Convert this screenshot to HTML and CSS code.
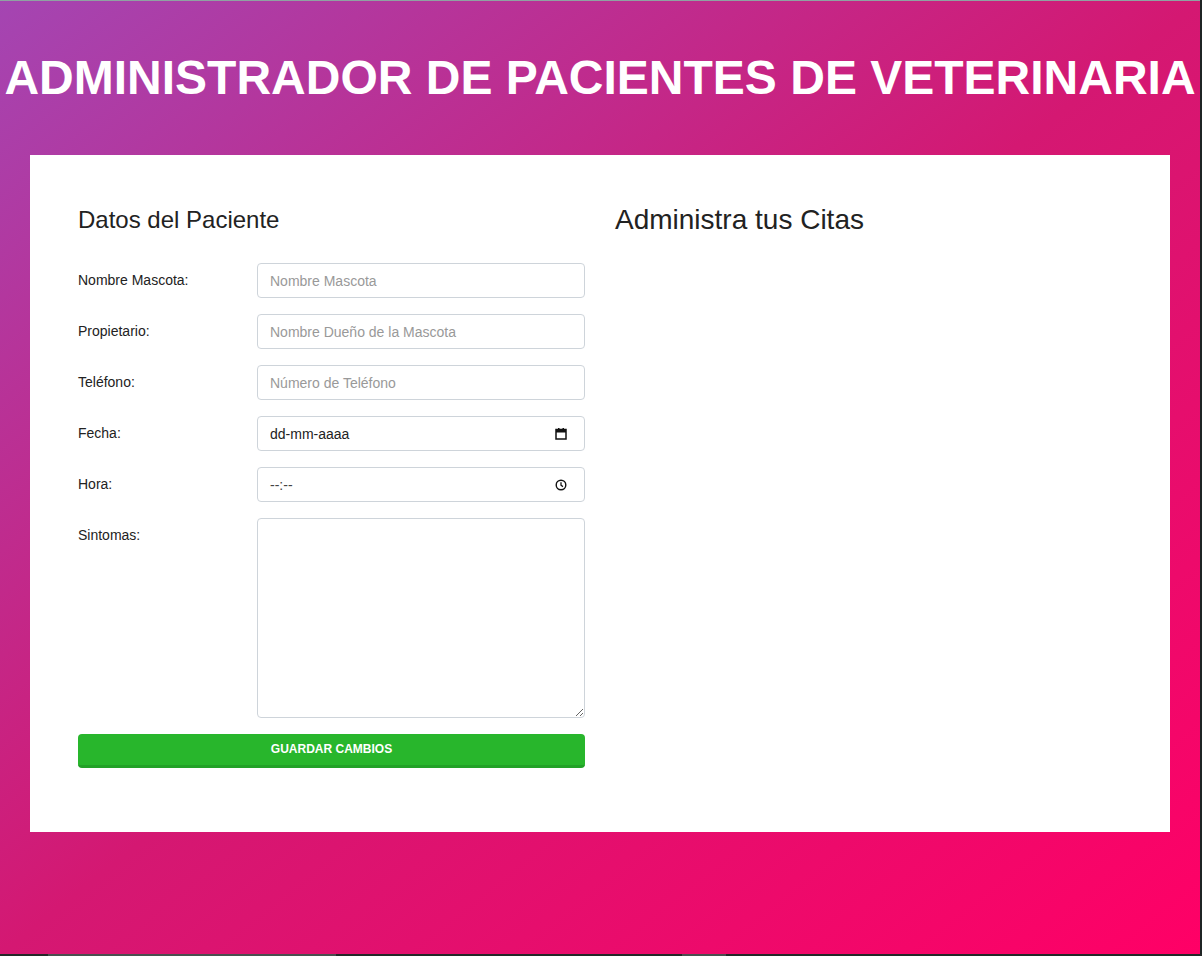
FILE: index.html
```html
<!DOCTYPE html>
<html lang="es">
<head>
<meta charset="utf-8">
<title>Administrador de Pacientes</title>
<link rel="stylesheet" href="styles.css">
</head>
<body>
<div class="screen">
  <h1 class="title">ADMINISTRADOR DE PACIENTES DE VETERINARIA</h1>
  <div class="card">
    <div class="col">
      <h2 class="heading">Datos del Paciente</h2>
      <form class="form">
        <div class="row">
          <label class="label">Nombre Mascota:</label>
          <input class="field" type="text" placeholder="Nombre Mascota">
        </div>
        <div class="row">
          <label class="label">Propietario:</label>
          <input class="field" type="text" placeholder="Nombre Dueño de la Mascota">
        </div>
        <div class="row">
          <label class="label">Teléfono:</label>
          <input class="field" type="text" placeholder="Número de Teléfono">
        </div>
        <div class="row">
          <label class="label">Fecha:</label>
          <div class="field fake">
            <span class="value">dd-mm-aaaa</span>
            <svg class="icon" width="14" height="14" viewBox="0 0 14 14"><rect x="2" y="2.5" width="10" height="9.5" fill="none" stroke="#111" stroke-width="1.5"/><rect x="2" y="2.5" width="10" height="3" fill="#111"/><rect x="4" y="1" width="1.5" height="2" fill="#111"/><rect x="8.5" y="1" width="1.5" height="2" fill="#111"/></svg>
          </div>
        </div>
        <div class="row">
          <label class="label">Hora:</label>
          <div class="field fake">
            <span class="value dim">--:--</span>
            <svg class="icon" width="14" height="14" viewBox="0 0 14 14"><circle cx="7" cy="7" r="4.8" fill="none" stroke="#111" stroke-width="1.4"/><path d="M7 4.2V7.2L9 8.6" fill="none" stroke="#111" stroke-width="1.3"/></svg>
          </div>
        </div>
        <div class="row">
          <label class="label">Sintomas:</label>
          <textarea class="field area"></textarea>
        </div>
        <button type="button" class="btn">GUARDAR CAMBIOS</button>
      </form>
    </div>
    <div class="col">
      <h2 class="heading big">Administra tus Citas</h2>
    </div>
  </div>
</div>
<div class="taskbar"><span class="thumb t1"></span><span class="thumb t2"></span></div>
</body>
</html>
```

FILE: styles.css
```css
html, body {
  margin: 0;
  padding: 0;
  background: #1f2424;
}
body {
  font-family: "Liberation Sans", Arial, sans-serif;
  color: #222;
  width: 1202px;
  height: 956px;
  overflow: hidden;
}
.screen {
  width: 1200px;
  height: 953px;
  border-top: 1px solid #8fa2a2;
  background: linear-gradient(to right bottom, #a445b2, #d41872, #ff0066);
  overflow: hidden;
}
.title {
  margin: 44px 0 0 0;
  height: 110px;
  font-size: 48px;
  line-height: 66px;
  font-weight: bold;
  color: #fff;
  text-align: center;
  white-space: nowrap;
}
.card {
  margin-left: 30px;
  width: 1140px;
  height: 677px;
  box-sizing: border-box;
  background: #fff;
  padding: 50px 48px 0 48px;
  display: flex;
  gap: 30px;
}
.col {
  width: 507px;
}
.heading {
  margin: 0 0 29px 0;
  font-size: 24px;
  font-weight: normal;
  line-height: 29px;
  color: #222;
}
.heading.big {
  font-size: 28px;
  line-height: 29px;
}
.form {
  display: flex;
  flex-direction: column;
}
.row {
  display: flex;
  margin-bottom: 16px;
}
.label {
  width: 179px;
  flex: none;
  font-size: 14px;
  line-height: 21px;
  padding-top: 7px;
  color: #222;
}
.field {
  width: 328px;
  height: 35px;
  box-sizing: border-box;
  border: 1px solid #ced4da;
  border-radius: 4px;
  padding: 0 12px;
  font-family: "Liberation Sans", Arial, sans-serif;
  font-size: 14px;
  color: #222;
  background: #fff;
  outline: none;
}
.field::placeholder {
  color: #999;
}
.fake {
  display: flex;
  align-items: center;
  justify-content: space-between;
  padding-right: 16px;
}
.value {
  color: #222;
  font-size: 14px;
}
.value.dim {
  color: #444;
}
.icon {
  display: block;
}
.area {
  height: 200px;
  padding: 8px 12px;
  resize: vertical;
}
.btn {
  width: 507px;
  height: 34px;
  box-sizing: border-box;
  border: none;
  border-bottom: 3px solid #22a127;
  border-radius: 4px;
  background: #28b62c;
  color: #fff;
  font-family: "Liberation Sans", Arial, sans-serif;
  font-size: 12px;
  font-weight: bold;
  padding: 0 0 2px 0;
  cursor: pointer;
}
.taskbar {
  position: relative;
  width: 1202px;
  height: 2px;
  background: #242828;
}
.thumb {
  position: absolute;
  top: 0;
  height: 2px;
  background: #4a4f4f;
}
.t1 { left: 48px; width: 288px; }
.t2 { left: 682px; width: 44px; }
```
